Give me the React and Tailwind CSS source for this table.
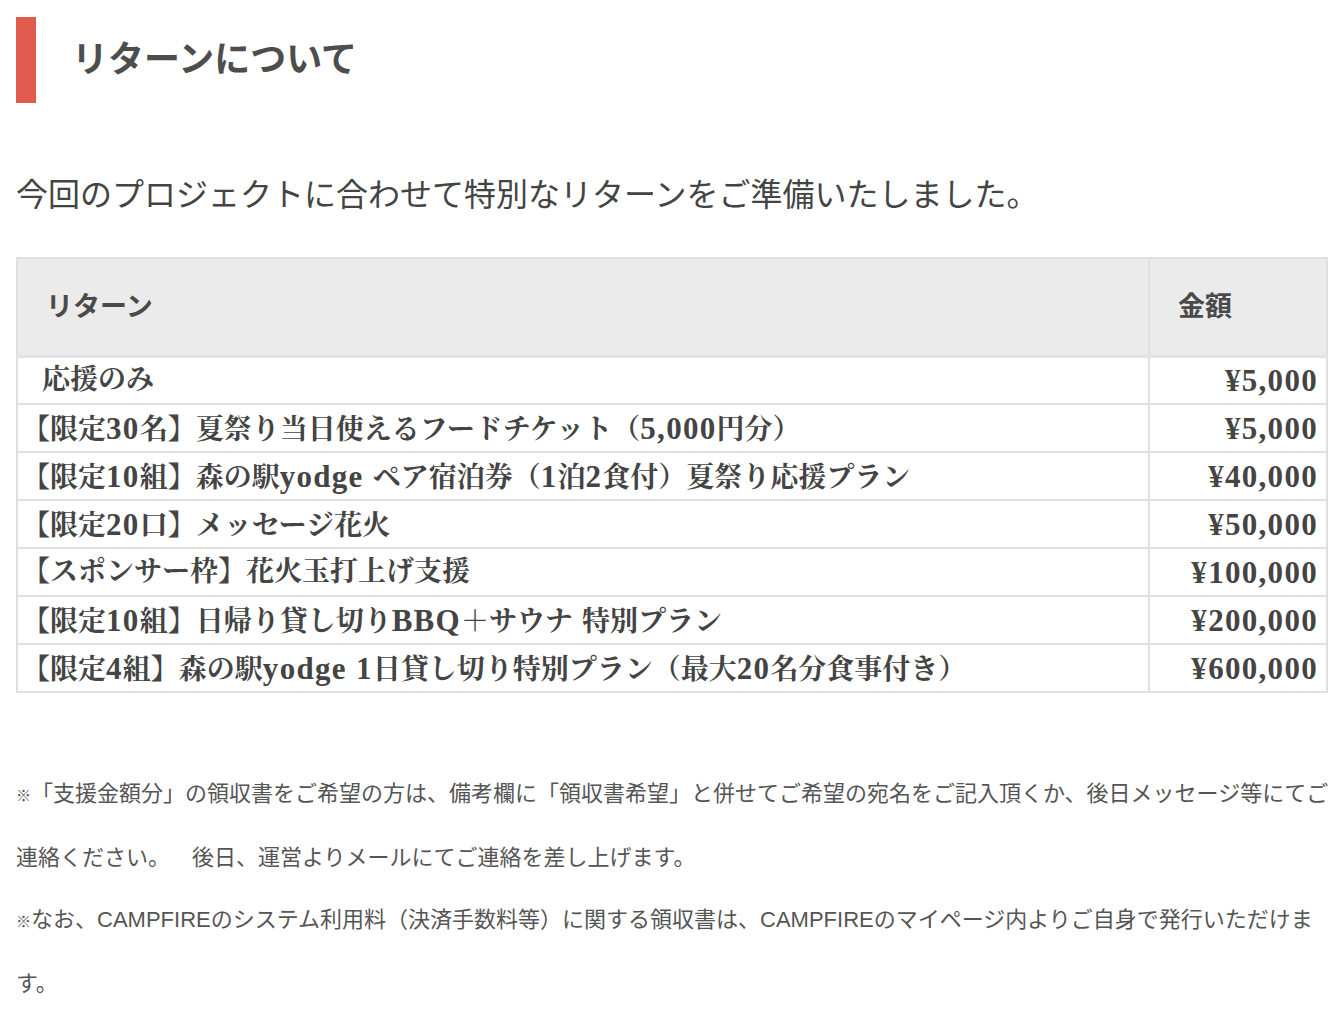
const returns = [
  { name: '応援のみ', price: '¥5,000', indent: true },
  { name: '【限定30名】夏祭り当日使えるフードチケット（5,000円分）', price: '¥5,000' },
  { name: '【限定10組】森の駅yodge ペア宿泊券（1泊2食付）夏祭り応援プラン', price: '¥40,000' },
  { name: '【限定20口】メッセージ花火', price: '¥50,000' },
  { name: '【スポンサー枠】花火玉打上げ支援', price: '¥100,000' },
  { name: '【限定10組】日帰り貸し切りBBQ＋サウナ 特別プラン', price: '¥200,000' },
  { name: '【限定4組】森の駅yodge 1日貸し切り特別プラン（最大20名分食事付き）', price: '¥600,000' },
]

const sans = 'font-["Liberation_Sans","Noto_Sans_CJK_JP",sans-serif]'
const serif = 'font-["Liberation_Serif","Noto_Serif_CJK_JP","Noto_Sans_CJK_JP",serif]'

// latin runs render a bit larger, like the mincho's proportional latin glyphs
function MixedText({ text }) {
  return text.split(/([0-9A-Za-z¥,. ]+)/).map((part, i) =>
    /^[0-9A-Za-z¥,. ]+$/.test(part) ? (
      <span key={i} className="text-[31px] tracking-[1.3px]">
        {part}
      </span>
    ) : (
      part
    )
  )
}

export default function App() {
  return (
    <div className={`min-h-[1018px] bg-white pl-4 pr-3 pt-[17px] pb-4 text-[#4a4a4a] ${sans}`}>
      <div className="flex h-[86px] items-center">
        <div className="h-full w-5 bg-[#e05a4e]" />
        <h2 className="ml-9 text-[36px] font-bold text-[#4d4d4d]">リターンについて</h2>
      </div>

      <p className="mt-[68px] text-[32px] leading-[48px] text-[#444]">
        今回のプロジェクトに合わせて特別なリターンをご準備いたしました。
      </p>

      <table className="mt-[38px] w-full border-collapse border-2 border-[#e0e0e0]">
        <thead>
          <tr className="bg-[#ebebeb]">
            <th className="h-[98px] border-b-[3px] border-r-2 border-[#e0e0e0] border-b-[#dfe2e7] pl-[28px] text-left text-[27px] font-bold text-[#4a4a4a]">
              リターン
            </th>
            <th className="h-[98px] w-[178px] border-b-[3px] border-[#e0e0e0] border-b-[#dfe2e7] pl-[28px] text-left text-[27px] font-bold text-[#4a4a4a]">
              金額
            </th>
          </tr>
        </thead>
        <tbody className={serif}>
          {returns.map((r) => (
            <tr key={r.name}>
              <td className="h-[48px] whitespace-nowrap border-2 border-[#e0e0e0] pl-[4px] text-[28px] font-bold leading-none text-[#444]">
                <span className={r.indent ? 'pl-[20px]' : ''}>
                  <MixedText text={r.name} />
                </span>
              </td>
              <td className="h-[48px] border-2 border-[#e0e0e0] pr-[8px] text-right text-[28px] font-bold leading-none text-[#444]">
                <MixedText text={r.price} />
              </td>
            </tr>
          ))}
        </tbody>
      </table>

      <div className="mt-[70px] text-[22px] leading-[62px] text-[#555]">
        <p className="whitespace-nowrap">
          <span className="text-[15px]">※</span>「支援金額分」の領収書をご希望の方は、備考欄に「領収書希望」と併せてご希望の宛名をご記入頂くか、後日メッセージ等にてご
          <br />
          連絡ください。<span className="inline-block w-[22px]" />後日、運営よりメールにてご連絡を差し上げます。
        </p>
        <p className="whitespace-nowrap">
          <span className="text-[15px]">※</span>なお、CAMPFIREのシステム利用料（決済手数料等）に関する領収書は、CAMPFIREのマイページ内よりご自身で発行いただけま
          <br />
          す。
        </p>
      </div>
    </div>
  )
}
